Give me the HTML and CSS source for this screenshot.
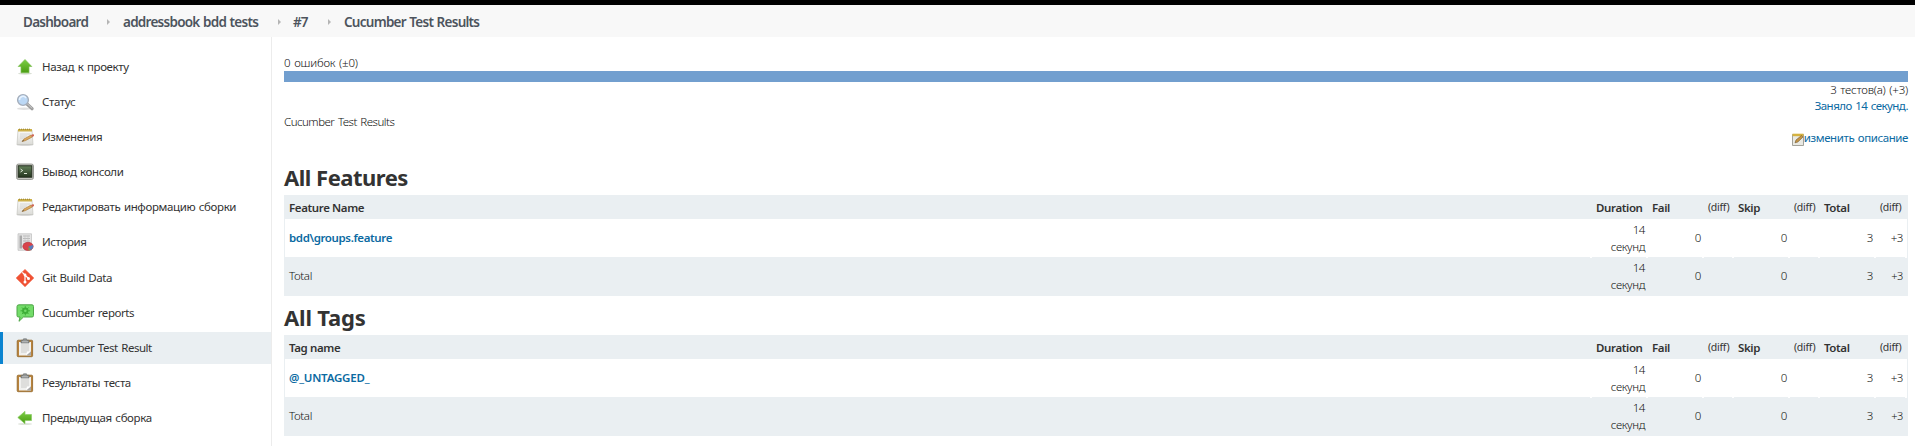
FILE: index.html
```html
<!DOCTYPE html>
<html lang="ru">
<head>
<meta charset="utf-8">
<title>Cucumber Test Results</title>
<link rel="stylesheet" href="styles.css">
</head>
<body>
<svg width="0" height="0" class="defs">
  <defs>
    <linearGradient id="green" x1="0" y1="0" x2="0" y2="1"><stop offset="0" stop-color="#7ccf45"/><stop offset="1" stop-color="#4a9c12"/></linearGradient>
    <linearGradient id="paper" x1="0" y1="0" x2="0" y2="1"><stop offset="0" stop-color="#fcfcfa"/><stop offset="1" stop-color="#dcdcd8"/></linearGradient>
    <linearGradient id="screen" x1="0" y1="0" x2="0" y2="1"><stop offset="0" stop-color="#64805a"/><stop offset="1" stop-color="#24351e"/></linearGradient>
    <symbol id="notepad" viewBox="0 0 18 18">
      <ellipse cx="9" cy="16.8" rx="8.5" ry="1" fill="#ccc"/>
      <path d="M2 2h14l1 14.5H1z" fill="url(#paper)" stroke="#c4c4be" stroke-width=".7"/>
      <path d="M2 1h14v2.5H2z" fill="#cdb04a"/><path d="M3 1.2h12" stroke="#94802d" stroke-dasharray="1 1"/>
      <path d="M4 6h10M4 8h7M4 10h5" stroke="#d0d0cc" stroke-width=".8"/>
      <path d="M6 13.5l2-2.5 7-4 1.3 2-7 3.7z" fill="#dca85b" stroke="#a87535" stroke-width=".6"/>
      <path d="M15 7l2.3-1.1 1 1.8-2 1.3z" fill="#cf6656"/><path d="M6 13.5l1.2-1.4.7 1z" fill="#444"/>
    </symbol>
    <symbol id="clipboard" viewBox="0 0 18 20">
      <rect x="1.2" y="2.2" width="15.4" height="16.5" rx="1" fill="#b9833b" stroke="#916427" stroke-width=".8"/>
      <path d="M3 4h12v13.5H3z" fill="#f1f1ef"/><path d="M5 6h8v9H5z" fill="#dededc"/><path d="M15 13v4.5h-5z" fill="#aaa"/><path d="M10 17.5l1-4 4-.3z" fill="#fff"/>
      <path d="M5 5V2.3h2L7.5.8h3l.5 1.5h2V5z" fill="#929696" stroke="#666a6a" stroke-width=".6"/><path d="M6 3.8h6" stroke="#c9cccc" stroke-width=".8"/>
    </symbol>
  </defs>
</svg>
<div class="topbar"></div>
<nav class="crumbs">
  <a class="c1">Dashboard</a><i class="s1"></i><a class="c2">addressbook bdd tests</a><i class="s2"></i><a class="c3">#7</a><i class="s3"></i><a class="c4">Cucumber Test Results</a>
</nav>
<div class="page">
  <aside class="side">
    <a class="task"><svg viewBox="0 0 18 18"><ellipse cx="9" cy="15.5" rx="7" ry="1.2" fill="#d9dfd5"/><path d="M9 1.500l6.800 7H13v6.300H5V8.500H2.200z" fill="url(#green)" stroke="#7cc052" stroke-width=".7"/></svg><span>Назад к проекту</span></a>
    <a class="task"><svg viewBox="0 0 18 18"><ellipse cx="8" cy="15.700" rx="7" ry="1.200" fill="#e0e0e0"/><path d="M11 11l5 4.700" stroke="#9b9b9b" stroke-width="3.200" stroke-linecap="round"/><path d="M11 10.500l5 4.700" stroke="#d0d0d0" stroke-linecap="round"/><circle cx="7" cy="7" r="5.400" fill="#bcd8f5" stroke="#a5aebb" stroke-width="1.400"/><path d="M3.500 7a3.500 3.500 0 0 1 6.500-2" fill="none" stroke="#e8f3ff" stroke-width="1.500"/></svg><span>Статус</span></a>
    <a class="task"><svg><use href="#notepad"/></svg><span>Изменения</span></a>
    <a class="task"><svg viewBox="0 0 18 18"><rect x=".5" y="1" width="17" height="15.500" rx="2" fill="#c5c6c0" stroke="#8a8c86" stroke-width=".8"/><rect x="2.200" y="2.800" width="13.600" height="11.400" fill="url(#screen)" stroke="#253020"/><path d="M4.500 6l2.200 1.500-2.200 1.500M8 10.500h3" stroke="#e0eadb" fill="none"/></svg><span>Вывод консоли</span></a>
    <a class="task"><svg><use href="#notepad"/></svg><span>Редактировать информацию сборки</span></a>
    <a class="task"><svg viewBox="0 0 18 18"><path d="M2 .8h13.500v16.500H2z" fill="#e5e5e5" stroke="#bdbdbd" stroke-width=".7"/><path d="M3.500 2.500H6v13H3.500z" fill="#a9a9a9"/><path d="M7 3h7M7 5.500h7M7 8h7M7 10.500h5M7 13h3" stroke="#bbb"/><path d="M9 2.500v13M12 2.500v8" stroke="#c4c4c4" stroke-width=".7"/><ellipse cx="12" cy="13.400" rx="5.200" ry="4.100" fill="#d8444b" stroke="#b52d36" stroke-width=".6"/><path d="M12.500 13.500l4.500-1.500q.7 3.500-2.500 5z" fill="#557fc0"/><path d="M12.500 13.500l2 3.500-2 .4z" fill="#70a954"/></svg><span>История</span></a>
    <a class="task latin"><svg viewBox="0 0 18 18"><path d="M9 .4L17.800 9 9 17.700.2 9z" fill="#f05133" stroke="#f05133" stroke-linejoin="round" stroke-width=".6"/><path d="M6.300 3.300L9 6v7M9 6l3.500 3.500" stroke="#fff" stroke-width="1.200" fill="none"/><circle cx="9" cy="6" r="1.400" fill="#fff"/><circle cx="9" cy="13" r="1.500" fill="#fff"/><circle cx="12.500" cy="9.500" r="1.500" fill="#fff"/></svg><span>Git Build Data</span></a>
    <a class="task latin"><svg viewBox="0 0 18 18"><path d="M3 .8h13q1.500 0 1.500 1.700v9q0 1.500-1.500 1.500H7.500L3 17.300 4 13H2.500Q1 13 1 11.500v-9Q1 .8 3 .8z" fill="#73dc69" stroke="#4fa548" stroke-width="1"/><circle cx="9.300" cy="6.800" r="3.200" fill="#3fae38"/><path d="M9.300 2.200v9.200M4.500 6.800h9.600M6 3.500l6.600 6.600M12.600 3.500L6 10.100" stroke="#3fae38" stroke-width="1"/><circle cx="9.300" cy="6.800" r="1.300" fill="#73dc69"/></svg><span>Cucumber reports</span></a>
    <a class="task latin active"><svg class="clip"><use href="#clipboard"/></svg><span>Cucumber Test Result</span></a>
    <a class="task"><svg class="clip"><use href="#clipboard"/></svg><span>Результаты теста</span></a>
    <a class="task"><svg viewBox="0 0 18 18"><ellipse cx="9" cy="15" rx="7" ry="1" fill="#dfe4db"/><path d="M1.800 8.500L9 2.300V5.500h6.500v6H9v3.200z" fill="url(#green)" stroke="#8bcb66" stroke-width=".7"/></svg><span>Предыдущая сборка</span></a>
  </aside>
  <main>
    <div class="fails">0 ошибок (±0)</div>
    <div class="bar"></div>
    <div class="right tests">3 тестов(а) (+3)</div>
    <div class="right took"><a>Заняло 14 секунд.</a></div>
    <div class="desc">Cucumber Test Results</div>
    <div class="right edit"><svg viewBox="0 0 12 13"><path d="M.5 1.500h11v11H.5z" fill="#e9e9e3" stroke="#8d8d85" stroke-width=".8"/><path d="M.5.7h11v2.500H.5z" fill="#d5b23f"/><path d="M3 9.800l1-2.800 5.500-4.500 1.500 1.500-5.200 5z" fill="#c69545" stroke="#6e552d" stroke-width=".6"/></svg><a>изменить описание</a></div>
    <h2 class="h-features">All Features</h2>
    <table>
      <colgroup><col><col class="w56"><col class="w56"><col class="w30"><col class="w56"><col class="w30"><col class="w56"><col class="w31"></colgroup>
      <tr class="head"><th>Feature Name</th><th>Duration</th><th>Fail</th><th class="df">(diff)</th><th>Skip</th><th class="df">(diff)</th><th>Total</th><th class="df">(diff)</th></tr>
      <tr><td><a>bdd\groups.feature</a></td><td>14<br>секунд</td><td>0</td><td></td><td>0</td><td></td><td>3</td><td>+3</td></tr>
      <tr class="total"><td>Total</td><td>14<br>секунд</td><td>0</td><td></td><td>0</td><td></td><td>3</td><td class="small">+3</td></tr>
    </table>
    <h2 class="h-tags">All Tags</h2>
    <table>
      <colgroup><col><col class="w56"><col class="w56"><col class="w30"><col class="w56"><col class="w30"><col class="w56"><col class="w31"></colgroup>
      <tr class="head"><th>Tag name</th><th>Duration</th><th>Fail</th><th class="df">(diff)</th><th>Skip</th><th class="df">(diff)</th><th>Total</th><th class="df">(diff)</th></tr>
      <tr><td><a class="tag">@_UNTAGGED_</a></td><td>14<br>секунд</td><td>0</td><td></td><td>0</td><td></td><td>3</td><td>+3</td></tr>
      <tr class="total"><td>Total</td><td>14<br>секунд</td><td>0</td><td></td><td>0</td><td></td><td>3</td><td class="small">+3</td></tr>
    </table>
  </main>
</div>
</body>
</html>
```
FILE: styles.css
```css
* { box-sizing: border-box; }
body { margin: 0; height: 446px; overflow: hidden; background: #fff; color: #333; font: 12px/16px "Noto Sans", "Open Sans", sans-serif; display: flex; flex-direction: column; }
.defs { position: absolute; }
.topbar { height: 5px; background: #000; flex: none; }
.crumbs { height: 32px; flex: none; background: #f8f8f8; display: flex; align-items: center; padding: 1px 0 0 23px; font-size: 13.5px; letter-spacing: -.74px; word-spacing: .7px; font-weight: 600; color: #4d545d; white-space: nowrap; }
.crumbs a { flex: none; }
.c1 { width: 64px; } .c2 { width: 136px; } .c3 { width: 16px; letter-spacing: -.9px; }
.crumbs i { flex: none; }
.s1 { width: 36px; padding-left: 20px; } .s2 { width: 34px; padding-left: 19px; } .s3 { width: 35px; padding-left: 19px; }
.crumbs i::before { content: ""; display: block; width: 0; border: 3px solid transparent; border-left-color: #b5b5b5; border-right: 0; }
.page { flex: 1; display: flex; }
.side { width: 272px; flex: none; border-right: 1px solid #ececec; padding-top: 14px; display: flex; flex-direction: column; gap: 3.1px; }
.task { height: 32px; flex: none; display: flex; align-items: center; gap: 8px; padding-left: 16px; white-space: nowrap; font-size: 11.5px; letter-spacing: -.38px; word-spacing: 1px; }
.latin { letter-spacing: -.47px; }
.task svg { width: 18px; height: 18px; flex: none; }
.task svg.clip { height: 20px; }
.active { background: #eaeff2; border-left: 3px solid #0b84d0; padding-left: 13px; }
main { flex: 1; padding: 17px 7px 0 12px; display: flex; flex-direction: column; }
main > * { flex: none; }
.fails { height: 17px; line-height: 18px; font-weight: 300; font-size: 11.5px; letter-spacing: -.2px; word-spacing: 1px; color: #111; }
.bar { height: 11px; background: #729fcf; }
.right { text-align: right; height: 16px; }
a { color: inherit; }
.right a, td a { color: #0b6aa2; }
.tests { font-weight: 300; line-height: 15px; font-size: 11.5px; letter-spacing: -.22px; word-spacing: 1px; color: #111; }
.took { line-height: 16px; font-size: 11.5px; letter-spacing: -.55px; word-spacing: 1px; }
.desc { height: 16px; line-height: 16px; font-weight: 300; font-size: 11.5px; letter-spacing: -.5px; word-spacing: 1px; color: #111; }
.edit { display: flex; justify-content: flex-end; align-items: center; font-size: 11.5px; letter-spacing: -.42px; word-spacing: 1px; }
.edit svg { width: 12px; height: 13px; margin-top: 3px; }
h2 { margin: 0; font-size: 22px; line-height: 30px; font-weight: 700; }
.h-features { height: 33px; margin-top: 16px; letter-spacing: -.5px; }
.h-tags { height: 33px; margin-top: 6px; letter-spacing: -.2px; }
table { width: 1624px; table-layout: fixed; border-collapse: separate; border-spacing: 0; border: 1px solid #eaeff2; font-size: 11.5px; letter-spacing: -.38px; }
.w56 { width: 56px; } .w30 { width: 30px; } .w31 { width: 31px; }
th, td { padding: 0 3px 1px; font-weight: 300; text-align: right; line-height: 17px; }
th { height: 23px; padding: 0 4px 1px; text-align: left; font-weight: 600; background: #eaeff2; }
th:first-child { padding-left: 4px; }
td { height: 38px; color: #111; }
td:first-child { text-align: left; padding-left: 4px; }
td:last-child { padding-right: 4px; }
td a { font-weight: 600; }
.tag { letter-spacing: -.2px; }
.total td { background: linear-gradient(#fff, #fff) right top / 2px 1px no-repeat, #eaeff2; }
th.df { font-size: 10.5px; font-weight: 400; letter-spacing: -.3px; white-space: nowrap; }
.small { font-size: 11px; }
```
